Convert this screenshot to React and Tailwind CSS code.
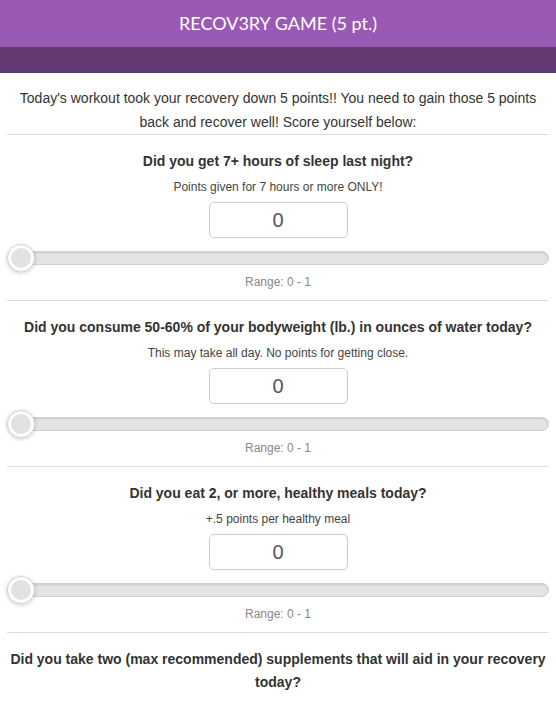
import { useState } from 'react';

const questions = [
    { title: 'Did you get 7+ hours of sleep last night?', note: 'Points given for 7 hours or more ONLY!' },
    { title: 'Did you consume 50-60% of your bodyweight (lb.) in ounces of water today?', note: 'This may take all day. No points for getting close.' },
    { title: 'Did you eat 2, or more, healthy meals today?', note: '+.5 points per healthy meal' },
    { title: 'Did you take two (max recommended) supplements that will aid in your recovery today?', note: 'Turmeric, Magnesium, Vitamin C, etc. Supplementation should be used as part of your recovery effort.' },
];

function Slider({ value }) {
    return (
        <div className="relative h-[28px] mx-[7px] flex items-center">
            <div className="w-full h-[14px] rounded-full bg-[#e4e4e4] border border-[#cfcfcf] shadow-[inset_0_1px_2px_rgba(0,0,0,0.12)]" />
            <div
                className="absolute top-0 w-[28px] h-[28px] rounded-full bg-white border border-[#d6d6d6] shadow-[0_1px_4px_rgba(0,0,0,0.2)] flex items-center justify-center"
                style={{ left: `${value * 100}%` }}
            >
                <div className="w-[20px] h-[20px] rounded-full bg-[#e2e2e2]" />
            </div>
        </div>
    );
}

function Question({ q }) {
    const [val] = useState(0);
    return (
        <div className="border-t border-[#dddddd] mx-[7px] pt-[15px] pb-[9px]">
            <h3 className="text-[14px] leading-[23px] font-bold text-[#333] text-center">{q.title}</h3>
            <p className="text-[12px] leading-[18px] text-[#444] text-center mt-[5px] px-2">{q.note}</p>
            <div className="flex justify-center mt-[6px]">
                <div className="w-[139px] h-[36px] border border-[#cccccc] rounded-[5px] flex items-center justify-center text-[20px] text-[#555]">
                    {val}
                </div>
            </div>
            <div className="mt-[6px] -mx-[7px]">
                <Slider value={val} />
            </div>
            <p className="text-[12px] leading-[18px] text-[#888] text-center mt-[1px]">Range: 0 - 1</p>
        </div>
    );
}

export default function App() {
    return (
        <div className="w-[556px] h-[703px] overflow-hidden bg-white font-['Liberation_Sans',Arial,sans-serif]">
            <div className="h-[47px] bg-[#9b59b6] flex items-center justify-center">
                <h1 className="text-white text-[18px] font-['Lato',sans-serif]">RECOV3RY GAME (5 pt.)</h1>
            </div>
            <div className="h-[26px] bg-[#633974]" />
            <p className="text-[14px] leading-[24px] text-[#333] text-center px-[10px] pt-[13px]">
                Today's workout took your recovery down 5 points!! You need to gain those 5 points back and recover well! Score yourself below:
            </p>
            {questions.map((q, i) => (
                <Question key={i} q={q} />
            ))}
        </div>
    );
}
